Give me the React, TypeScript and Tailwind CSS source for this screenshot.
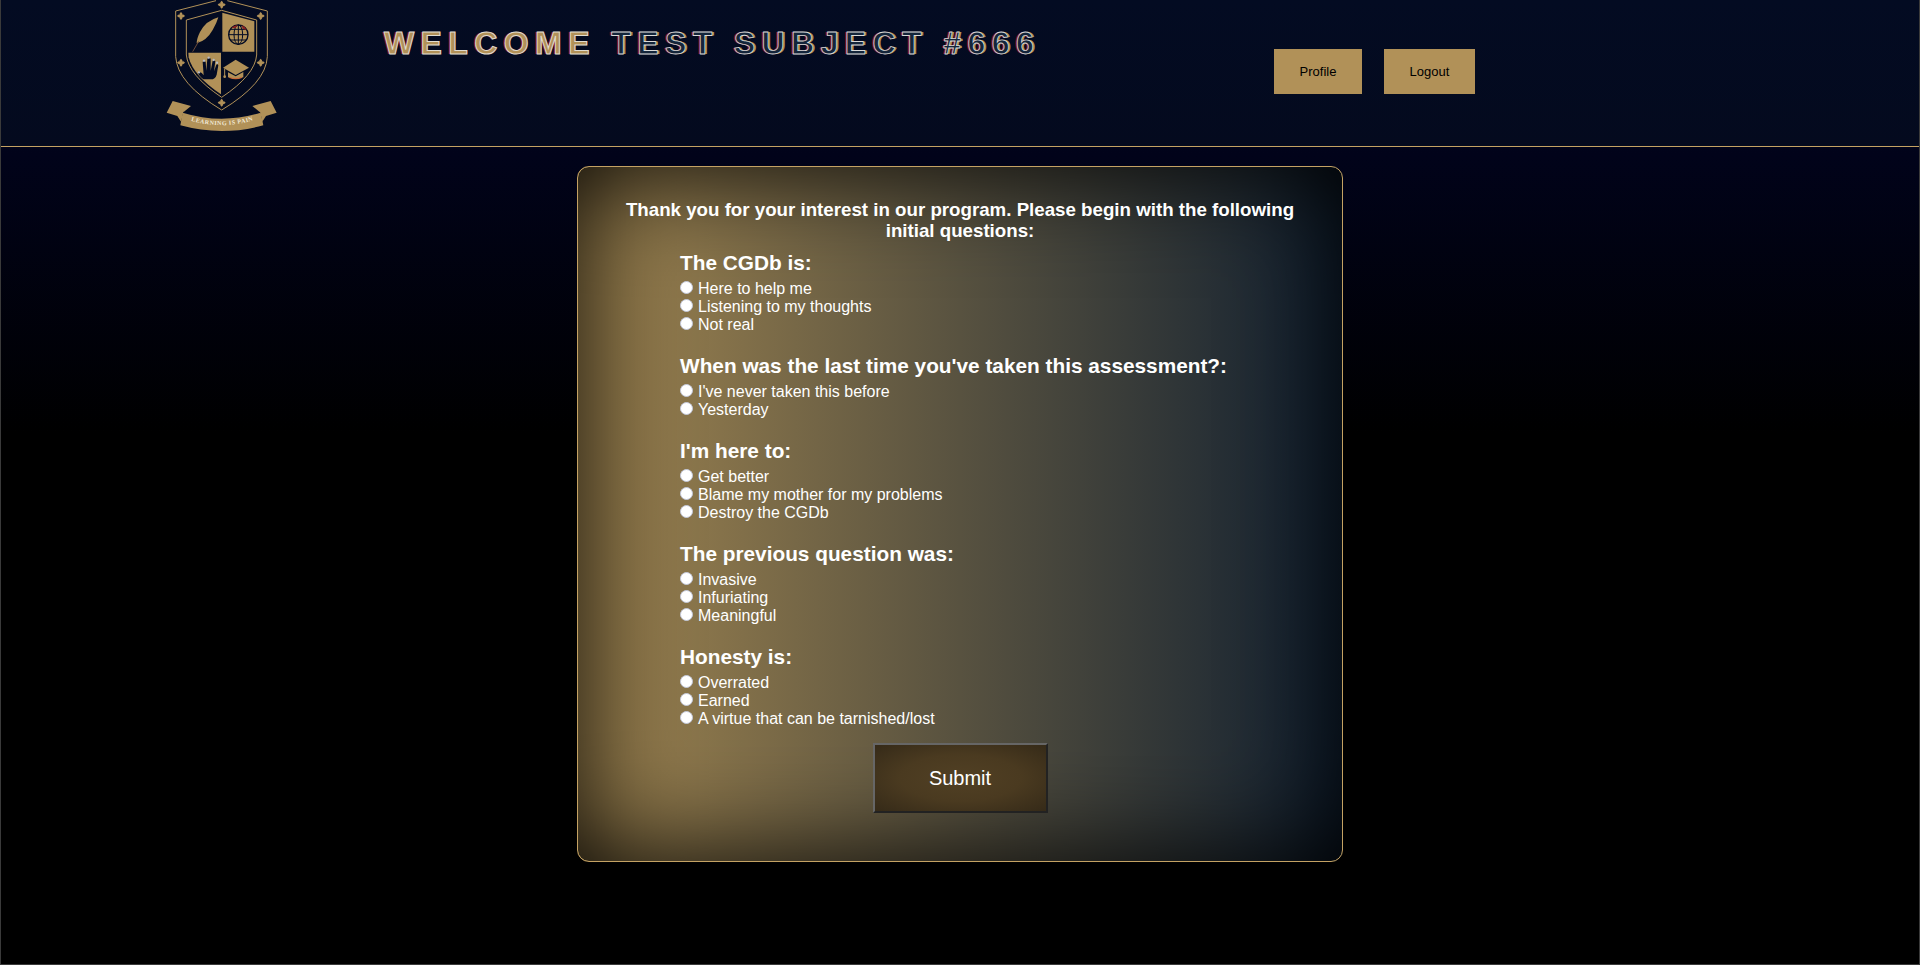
import React from 'react';

const questions = [
    { title: 'The CGDb is:', answers: ['Here to help me', 'Listening to my thoughts', 'Not real'] },
    { title: "When was the last time you've taken this assessment?:", answers: ["I've never taken this before", 'Yesterday'] },
    { title: "I'm here to:", answers: ['Get better', 'Blame my mother for my problems', 'Destroy the CGDb'] },
    { title: 'The previous question was:', answers: ['Invasive', 'Infuriating', 'Meaningful'] },
    { title: 'Honesty is:', answers: ['Overrated', 'Earned', 'A virtue that can be tarnished/lost'] },
];

const GOLD = '#b19158';
const NAVY = '#030b24';

const Fleur: React.FC<{ x: number; y: number }> = ({ x, y }) => (
    <g transform={`translate(${x} ${y})`} fill={GOLD}>
        <path d="M0 -12 Q7 -6 3 -3 Q6 -7 12 0 Q6 7 3 3 Q7 6 0 12 Q-7 6 -3 3 Q-6 7 -12 0 Q-6 -7 -3 -3 Q-7 -6 0 -12 Z" />
        <circle r="4.5" />
    </g>
);

const Logo: React.FC = () => (
    <svg viewBox="0 0 510 438" className="block w-[170px] h-[146px] shrink-0">
        {/* shield outlines */}
        <path d="M228 2 L107 33 L107 170 Q112 250 245 330 Q378 250 382 170 L382 33 L262 2" fill="none" stroke={GOLD} strokeWidth="3" />
        <path d="M245 31 L139 60 L139 165 Q145 225 245 292 Q345 225 350 165 L350 60 Z" fill="none" stroke={GOLD} strokeWidth="3" />
        {/* gold quarters */}
        <path d="M247 38 L343 64 L343 155 L247 155 Z" fill={GOLD} />
        <path d="M145 158 L243 158 L243 283 Q160 228 146 172 Z" fill={GOLD} />
        <Fleur x={245} y={14} />
        <Fleur x={123} y={48} />
        <Fleur x={362} y={48} />
        <Fleur x={123} y={188} />
        <Fleur x={362} y={188} />
        <Fleur x={245} y={308} />
        {/* quill */}
        <path d="M235 52 Q198 62 180 96 Q170 116 170 130 Q200 122 218 90 Q230 70 235 52 Z" fill={GOLD} />
        <path d="M176 124 L158 155" stroke="#6b4a3a" strokeWidth="3" fill="none" />
        {/* globe */}
        <g fill="none" stroke={NAVY} strokeWidth="3">
            <circle cx="295" cy="104" r="29" fill={GOLD} strokeWidth="4" />
            <ellipse cx="295" cy="104" rx="13" ry="29" />
            <path d="M295 75 L295 133 M266 104 L324 104 M271 88 L319 88 M271 120 L319 120" />
        </g>
        <path d="M274 84 Q284 74 294 76 L286 84 Z M305 76 Q316 80 320 90 L308 86 Z" fill="#8a1f1f" />
        {/* hand */}
        <path d="M190 238 Q176 226 174 218 Q178 212 186 220 L191 226 L188 186 Q192 180 197 186 L199 212 L202 176 Q207 170 212 176 L212 212 L218 182 Q223 178 226 184 L222 214 L229 194 Q233 190 235 196 L230 224 Q226 238 212 238 Z" fill={NAVY} />
        <g fill="#b9bcc4">
            <circle cx="177" cy="217" r="3.5" />
            <circle cx="192" cy="182" r="3.5" />
            <circle cx="206" cy="173" r="3.5" />
            <circle cx="221" cy="180" r="3.5" />
            <circle cx="231" cy="188" r="3.5" />
        </g>
        {/* graduation cap */}
        <path d="M287 179 L327 203 L287 225 L249 203 Z" fill={GOLD} />
        <path d="M264 217 L264 232 Q287 240 310 232 L310 216 L287 229 Z" fill={GOLD} />
        <path d="M254 206 L254 228" stroke={GOLD} strokeWidth="3" />
        <path d="M268 230 Q287 238 306 230 L306 234 Q287 242 268 234 Z" fill="#c96a3a" />
        <circle cx="254" cy="230" r="4" fill={GOLD} />
        {/* ribbon */}
        <path d="M153 318 L98 303 L80 338 L112 348 L125 368 L132 335 Z" fill={GOLD} />
        <path d="M337 318 L392 303 L410 338 L378 348 L365 368 L358 335 Z" fill={GOLD} />
        <path d="M130 335 Q245 372 360 335 L370 376 Q245 412 121 376 Z" fill={NAVY} />
        <path d="M128 338 Q245 374 362 338 L370 376 Q245 410 121 376 Z" fill={GOLD} />
        <path id="crest-motto" d="M146 360 Q245 392 348 358" fill="none" />
        <text fill="#f1ead8" fontFamily="'Liberation Serif', serif" fontWeight="700" fontSize="18" letterSpacing="1.5">
            <textPath href="#crest-motto" startOffset="50%" textAnchor="middle">LEARNING IS PAIN</textPath>
        </text>
    </svg>
);

const Question: React.FC<{ title: string; answers: string[]; name: string }> = ({ title, answers, name }) => (
    <fieldset className="mb-[20px]">
        <h3 className="text-[20.8px] leading-[24px] font-bold mb-[5px]">{title}</h3>
        {answers.map(answer => (
            <label key={answer} className="flex items-center h-[18px] text-[16px] leading-[18px]">
                <input
                    type="radio"
                    name={name}
                    className="appearance-none w-[13px] h-[13px] mr-[5px] mb-[3px] rounded-full bg-white border border-[#c4c9dc] shrink-0"
                />
                {answer}
            </label>
        ))}
    </fieldset>
);

export default function App() {
    return (
        <div className="min-h-[965px] box-border border border-t-0 border-[#3a3a3a] bg-[linear-gradient(180deg,#030b22_0%,#01031a_16%,#000000_45%)] font-['Liberation_Sans',Arial,sans-serif] text-white overflow-hidden">
            <header className="flex h-[147px] border-b border-[#c4a263] bg-[linear-gradient(180deg,#030b22,#040a1e)]">
                <div className="ml-[139px] w-[244px] shrink-0">
                    <Logo />
                </div>
                <h1 className="mt-[24px] w-[890px] shrink-0 h-[38px] text-[32px] leading-[38px] font-bold tracking-[6.4px] whitespace-nowrap text-[#14253a] [-webkit-text-stroke:0.8px_#d9d9d9] [text-shadow:-2px_0_0_#7a1420,2px_0_0_#b19158]">
                    <span className="text-[#b19158] [-webkit-text-stroke:1px_#e0dccf] [text-shadow:-2px_0_0_#7a1420]">WELCOME</span> TEST SUBJECT #666
                </h1>
                <nav className="flex gap-[22px] mt-[49px] h-[45px]">
                    <button className="w-[88px] bg-[#b19158] text-black text-[13px]">Profile</button>
                    <button className="w-[91px] bg-[#b19158] text-black text-[13px]">Logout</button>
                </nav>
            </header>

            <main className="w-[766px] h-[696px] box-border mx-auto mt-[19px] pt-[32px] border border-[#c4a263] rounded-[12px] bg-[linear-gradient(90deg,#a08550_0%,#101f30_100%)] shadow-[inset_0_0_110px_0_#000]">
                <p className="w-[680px] mx-auto text-center text-[18.72px] leading-[21px] font-bold mb-[10px]">
                    Thank you for your interest in our program. Please begin with the following initial questions:
                </p>
                <form className="pl-[102px]" onSubmit={e => e.preventDefault()}>
                    {questions.map((q, i) => (
                        <Question key={q.title} title={q.title} answers={q.answers} name={`q${i}`} />
                    ))}
                    <div className="-ml-[102px] flex justify-center -mt-[5px]">
                        <button className="w-[175px] h-[70px] text-[20px] text-white border-2 border-t-[#666666] border-l-[#666666] border-r-[#222222] border-b-[#222222] bg-[radial-gradient(ellipse_at_center,#514024_0%,#4a3a20_50%,#352a18_100%)]">
                            Submit
                        </button>
                    </div>
                </form>
            </main>
        </div>
    );
}
